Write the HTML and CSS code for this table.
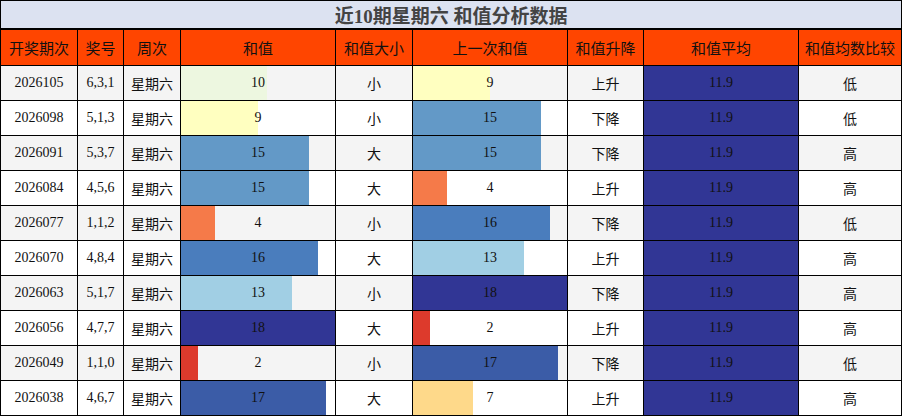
FILE: index.html
```html
<!DOCTYPE html>
<html lang="zh">
<head>
<meta charset="utf-8">
<title>近10期星期六 和值分析数据</title>
<link rel="stylesheet" href="styles.css">
</head>
<body>
<table class="sheet">
  <colgroup>
    <col class="c-issue"><col class="c-num"><col class="c-week"><col class="c-sum"><col class="c-size"><col class="c-prev"><col class="c-trend"><col class="c-avg"><col class="c-cmp">
  </colgroup>
  <thead>
    <tr class="title-row"><th colspan="9" class="title">近10期星期六 和值分析数据</th></tr>
    <tr class="head-row">
      <th>开奖期次</th><th>奖号</th><th>周次</th><th>和值</th><th>和值大小</th><th>上一次和值</th><th>和值升降</th><th>和值平均</th><th>和值均数比较</th>
    </tr>
  </thead>
  <tbody>
    <tr><td>2026105</td><td>6,3,1</td><td>星期六</td><td class="bar"><span class="fill v10" style="width:55.6%"></span><span class="val">10</span></td><td>小</td><td class="bar"><span class="fill v9" style="width:50%"></span><span class="val">9</span></td><td>上升</td><td class="avg">11.9</td><td>低</td></tr>
    <tr><td>2026098</td><td>5,1,3</td><td>星期六</td><td class="bar"><span class="fill v9" style="width:50%"></span><span class="val">9</span></td><td>小</td><td class="bar"><span class="fill v15" style="width:83.3%"></span><span class="val">15</span></td><td>下降</td><td class="avg">11.9</td><td>低</td></tr>
    <tr><td>2026091</td><td>5,3,7</td><td>星期六</td><td class="bar"><span class="fill v15" style="width:83.3%"></span><span class="val">15</span></td><td>大</td><td class="bar"><span class="fill v15" style="width:83.3%"></span><span class="val">15</span></td><td>下降</td><td class="avg">11.9</td><td>高</td></tr>
    <tr><td>2026084</td><td>4,5,6</td><td>星期六</td><td class="bar"><span class="fill v15" style="width:83.3%"></span><span class="val">15</span></td><td>大</td><td class="bar"><span class="fill v4" style="width:22.2%"></span><span class="val">4</span></td><td>上升</td><td class="avg">11.9</td><td>高</td></tr>
    <tr><td>2026077</td><td>1,1,2</td><td>星期六</td><td class="bar"><span class="fill v4" style="width:22.2%"></span><span class="val">4</span></td><td>小</td><td class="bar"><span class="fill v16" style="width:88.9%"></span><span class="val">16</span></td><td>下降</td><td class="avg">11.9</td><td>低</td></tr>
    <tr><td>2026070</td><td>4,8,4</td><td>星期六</td><td class="bar"><span class="fill v16" style="width:88.9%"></span><span class="val">16</span></td><td>大</td><td class="bar"><span class="fill v13" style="width:72.2%"></span><span class="val">13</span></td><td>上升</td><td class="avg">11.9</td><td>高</td></tr>
    <tr><td>2026063</td><td>5,1,7</td><td>星期六</td><td class="bar"><span class="fill v13" style="width:72.2%"></span><span class="val">13</span></td><td>小</td><td class="bar"><span class="fill v18" style="width:100%"></span><span class="val">18</span></td><td>下降</td><td class="avg">11.9</td><td>高</td></tr>
    <tr><td>2026056</td><td>4,7,7</td><td>星期六</td><td class="bar"><span class="fill v18" style="width:100%"></span><span class="val">18</span></td><td>大</td><td class="bar"><span class="fill v2" style="width:11.1%"></span><span class="val">2</span></td><td>上升</td><td class="avg">11.9</td><td>高</td></tr>
    <tr><td>2026049</td><td>1,1,0</td><td>星期六</td><td class="bar"><span class="fill v2" style="width:11.1%"></span><span class="val">2</span></td><td>小</td><td class="bar"><span class="fill v17" style="width:94.4%"></span><span class="val">17</span></td><td>下降</td><td class="avg">11.9</td><td>低</td></tr>
    <tr><td>2026038</td><td>4,6,7</td><td>星期六</td><td class="bar"><span class="fill v17" style="width:94.4%"></span><span class="val">17</span></td><td>大</td><td class="bar"><span class="fill v7" style="width:38.9%"></span><span class="val">7</span></td><td>上升</td><td class="avg">11.9</td><td>高</td></tr>
  </tbody>
</table>
</body>
</html>
```

FILE: styles.css
```css
html, body {
  margin: 0;
  padding: 0;
  background: #ffffff;
}

.sheet {
  border-collapse: collapse;
  table-layout: fixed;
  width: 901px;
  font-family: "Liberation Serif", "Noto Sans CJK SC", serif;
  color: #111;
}

.c-issue { width: 77px; }
.c-num { width: 46px; }
.c-week { width: 57px; }
.c-sum { width: 155px; }
.c-size { width: 77px; }
.c-prev { width: 155px; }
.c-trend { width: 76px; }
.c-avg { width: 155px; }
.c-cmp { width: 103px; }

.sheet th,
.sheet td {
  border: 1px solid #000;
  padding: 0;
  text-align: center;
  vertical-align: middle;
  overflow: hidden;
  white-space: nowrap;
}

.title-row .title {
  height: 27px;
  background: #dce2f1;
  color: #444;
  font-size: 19px;
  font-weight: bold;
  border-bottom: 2px solid #000;
}

.head-row th {
  height: 35px;
  background: #ff4500;
  font-size: 15px;
  font-weight: normal;
  color: #111;
}

.sheet td {
  height: 34px;
  font-size: 14px;
}

.sheet tbody tr:nth-child(odd) td {
  background: #f4f4f4;
}

.sheet tbody tr:nth-child(even) td {
  background: #ffffff;
}

.sheet td.bar {
  position: relative;
}

.fill {
  position: absolute;
  left: 0;
  top: 0;
  bottom: 0;
}

.val {
  position: relative;
}

.v2 { background: #dd3a2c; }
.v4 { background: #f57a49; }
.v7 { background: #fed98a; }
.v9 { background: #ffffc0; }
.v10 { background: #edf7e0; }
.v13 { background: #a1cfe4; }
.v15 { background: #6399c7; }
.v16 { background: #4a7dbd; }
.v17 { background: #3b5ca7; }
.v18 { background: #313695; }

.sheet tbody tr td.avg {
  background: #313695;
  color: #111;
}
```
